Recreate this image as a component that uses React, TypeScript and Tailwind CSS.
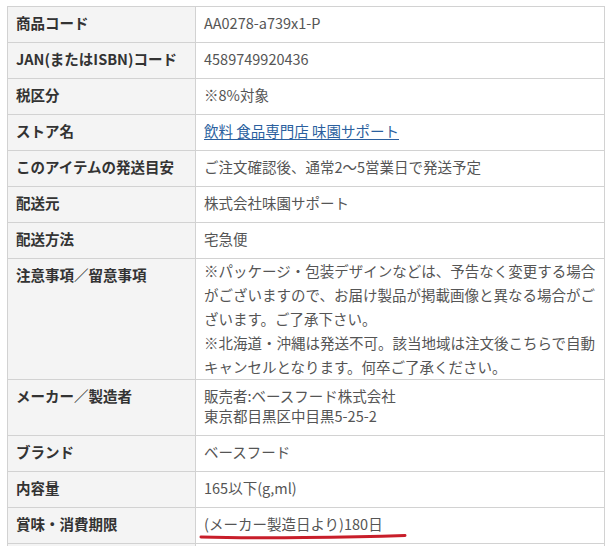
const rows: { label: string; value: React.ReactNode; cell?: string }[] = [
  { label: "商品コード", value: "AA0278-a739x1-P" },
  { label: "JAN(またはISBN)コード", value: "4589749920436" },
  { label: "税区分", value: "※8%対象" },
  {
    label: "ストア名",
    value: (
      <a href="#" className="text-[#2b5f9e] underline underline-offset-2">
        飲料 食品専門店 味園サポート
      </a>
    ),
  },
  { label: "このアイテムの発送目安", value: "ご注文確認後、通常2～5営業日で発送予定" },
  { label: "配送元", value: "株式会社味園サポート" },
  { label: "配送方法", value: "宅急便" },
  {
    label: "注意事項／留意事項",
    cell: "pt-0 pb-0 leading-[24px]",
    value: (
      <>
        ※パッケージ・包装デザインなどは、予告なく変更する場合
        <br />
        がございますので、お届け製品が掲載画像と異なる場合がご
        <br />
        ざいます。ご了承下さい。
        <br />
        ※北海道・沖縄は発送不可。該当地域は注文後こちらで自動
        <br />
        キャンセルとなります。何卒ご了承ください。
      </>
    ),
  },
  {
    label: "メーカー／製造者",
    cell: "pt-[6px] pb-[9px] leading-[20px]",
    value: (
      <>
        販売者:ベースフード株式会社
        <br />
        東京都目黒区中目黒5-25-2
      </>
    ),
  },
  { label: "ブランド", value: "ベースフード" },
  { label: "内容量", value: "165以下(g,ml)" },
];

export default function App() {
  return (
    <div
      className="min-h-[546px] bg-white pl-[7px] pt-[6px]"
      style={{ fontFamily: '"Noto Sans CJK JP", "Noto Sans", sans-serif' }}
    >
      <table className="w-[598px] border-collapse text-[14.5px] leading-[21px]">
        <tbody>
          {rows.map((r) => (
            <tr key={r.label}>
              <th className="w-[188px] border border-[#d2d2d2] bg-[#f4f4f4] pt-[5px] pb-[9px] pl-[8px] pr-1 text-left align-top font-bold text-[#333] whitespace-nowrap">
                {r.label}
              </th>
              <td
                className={`border border-[#d2d2d2] pl-[8px] pr-[3px] align-top text-[#555] whitespace-nowrap ${
                  r.cell ?? "pt-[5px] pb-[9px]"
                }`}
              >
                {r.value}
              </td>
            </tr>
          ))}
          <tr>
            <th className="w-[188px] border border-[#d2d2d2] bg-[#f4f4f4] pt-[5px] pb-[9px] pl-[8px] pr-1 text-left align-top font-bold text-[#333]">
              賞味・消費期限
            </th>
            <td className="relative border border-[#d2d2d2] pt-[5px] pb-[9px] pl-[8px] pr-[3px] align-top text-[#555]">
              (メーカー製造日より)180日
              <svg
                className="pointer-events-none absolute left-[3px] top-[24px]"
                width="212"
                height="8"
                viewBox="0 0 212 8"
              >
                <path
                  d="M2 5 C 60 6.5, 150 5.5, 206 3.5"
                  stroke="#c81e2a"
                  strokeWidth="3"
                  strokeLinecap="round"
                  fill="none"
                />
              </svg>
            </td>
          </tr>
          <tr>
            <th className="h-[8px] border border-[#d2d2d2] bg-[#f4f4f4]" />
            <td className="h-[8px] border border-[#d2d2d2]" />
          </tr>
        </tbody>
      </table>
    </div>
  );
}
